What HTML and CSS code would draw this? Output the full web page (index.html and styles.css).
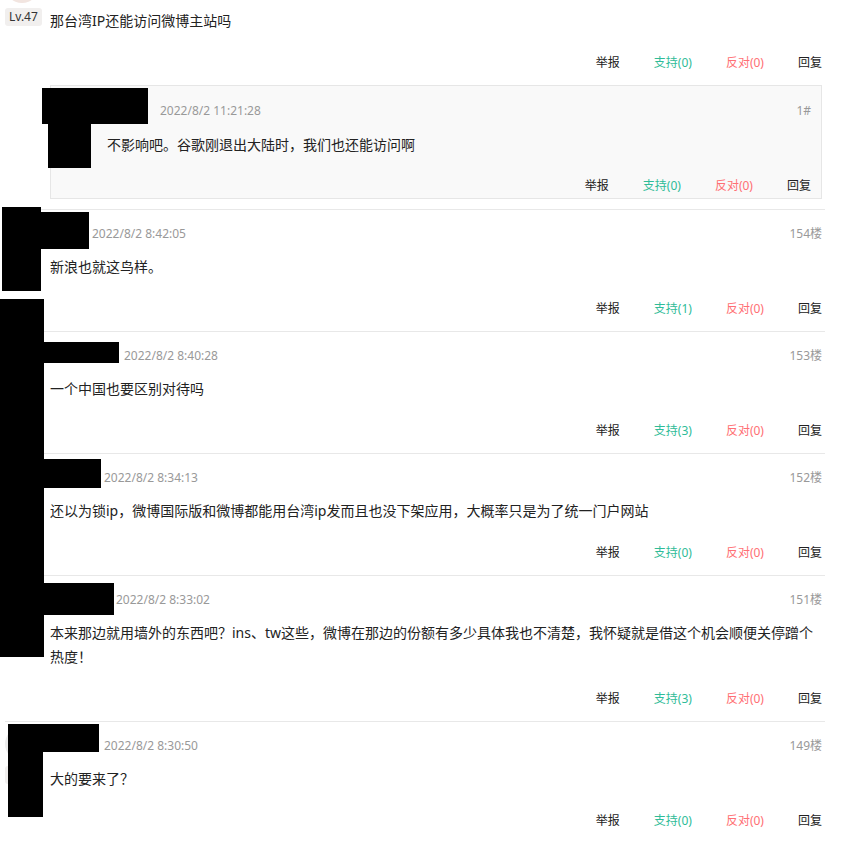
FILE: index.html
```html
<!DOCTYPE html>
<html lang="zh-CN">

<head>
    <meta charset="UTF-8">
    <meta name="viewport" content="width=device-width, initial-scale=1.0">
    <title>评论</title>
    <link rel="stylesheet" href="styles.css">
</head>

<body>
    <!-- 评论列表 -->
    <div class="comments">
        <div class="comment has-replies">
            <div class="avatar-col">
                <div class="avatar avatar-pink"></div>
                <span class="level">Lv.47</span>
            </div>
            <div class="comment-body">
                <div class="comment-head">
                    <span class="name" style="width:60px">网友</span>
                    <span class="time">2022/8/2 8:50:11</span>
                    <span class="floor">155楼</span>
                </div>
                <div class="comment-text">那台湾IP还能访问微博主站吗</div>
                <div class="actions">
                    <a href="#">举报</a>
                    <a href="#" class="up">支持(0)</a>
                    <a href="#" class="down">反对(0)</a>
                    <a href="#">回复</a>
                </div>

                <!-- 楼中楼 -->
                <div class="reply">
                    <div class="avatar-col">
                        <div class="avatar"></div>
                        <span class="level">Lv.3</span>
                    </div>
                    <div class="comment-body">
                        <div class="comment-head">
                            <span class="name" style="width:49px">昆仑</span>
                            <span class="time">2022/8/2 11:21:28</span>
                            <span class="floor">1#</span>
                        </div>
                        <div class="comment-text">不影响吧。谷歌刚退出大陆时，我们也还能访问啊</div>
                        <div class="actions">
                            <a href="#">举报</a>
                            <a href="#" class="up">支持(0)</a>
                            <a href="#" class="down">反对(0)</a>
                            <a href="#">回复</a>
                        </div>
                    </div>
                </div>
            </div>
        </div>

        <div class="comment">
            <div class="avatar-col">
                <div class="avatar"></div>
                <span class="level">Lv.8</span>
            </div>
            <div class="comment-body">
                <div class="comment-head">
                    <span class="name" style="width:38px">网友</span>
                    <span class="time">2022/8/2 8:42:05</span>
                    <span class="floor">154楼</span>
                </div>
                <div class="comment-text">新浪也就这鸟样。</div>
                <div class="actions">
                    <a href="#">举报</a>
                    <a href="#" class="up">支持(1)</a>
                    <a href="#" class="down">反对(0)</a>
                    <a href="#">回复</a>
                </div>
            </div>
        </div>

        <div class="comment">
            <div class="avatar-col">
                <div class="avatar"></div>
                <span class="level">Lv.20</span>
            </div>
            <div class="comment-body">
                <div class="comment-head">
                    <span class="name" style="width:70px">网友</span>
                    <span class="time">2022/8/2 8:40:28</span>
                    <span class="floor">153楼</span>
                </div>
                <div class="comment-text">一个中国也要区别对待吗</div>
                <div class="actions">
                    <a href="#">举报</a>
                    <a href="#" class="up">支持(3)</a>
                    <a href="#" class="down">反对(0)</a>
                    <a href="#">回复</a>
                </div>
            </div>
        </div>

        <div class="comment">
            <div class="avatar-col">
                <div class="avatar"></div>
                <span class="level">Lv.15</span>
            </div>
            <div class="comment-body">
                <div class="comment-head">
                    <span class="name" style="width:50px">网友</span>
                    <span class="time">2022/8/2 8:34:13</span>
                    <span class="floor">152楼</span>
                </div>
                <div class="comment-text">还以为锁ip，微博国际版和微博都能用台湾ip发而且也没下架应用，大概率只是为了统一门户网站</div>
                <div class="actions">
                    <a href="#">举报</a>
                    <a href="#" class="up">支持(0)</a>
                    <a href="#" class="down">反对(0)</a>
                    <a href="#">回复</a>
                </div>
            </div>
        </div>

        <div class="comment">
            <div class="avatar-col">
                <div class="avatar"></div>
                <span class="level">Lv.31</span>
            </div>
            <div class="comment-body">
                <div class="comment-head">
                    <span class="name" style="width:62px">网友</span>
                    <span class="time">2022/8/2 8:33:02</span>
                    <span class="floor">151楼</span>
                </div>
                <div class="comment-text">本来那边就用墙外的东西吧？ins、tw这些，微博在那边的份额有多少具体我也不清楚，我怀疑就是借这个机会顺便关停蹭个热度！</div>
                <div class="actions">
                    <a href="#">举报</a>
                    <a href="#" class="up">支持(3)</a>
                    <a href="#" class="down">反对(0)</a>
                    <a href="#">回复</a>
                </div>
            </div>
        </div>

        <div class="comment">
            <div class="avatar-col">
                <div class="avatar"></div>
                <span class="level">Lv.9</span>
            </div>
            <div class="comment-body">
                <div class="comment-head">
                    <span class="name" style="width:50px">网友</span>
                    <span class="time">2022/8/2 8:30:50</span>
                    <span class="floor">149楼</span>
                </div>
                <div class="comment-text">大的要来了？</div>
                <div class="actions">
                    <a href="#">举报</a>
                    <a href="#" class="up">支持(0)</a>
                    <a href="#" class="down">反对(0)</a>
                    <a href="#">回复</a>
                </div>
            </div>
        </div>
    </div>

    <!-- 打码块，盖在头像和昵称上 -->
    <div class="redactions">
        <div class="redact" style="left:42px;top:88px;width:106px;height:36px"></div>
        <div class="redact" style="left:48px;top:124px;width:43px;height:44px"></div>
        <div class="redact" style="left:2px;top:207px;width:39px;height:84px"></div>
        <div class="redact" style="left:41px;top:212px;width:48px;height:37px"></div>
        <div class="redact" style="left:0;top:299px;width:44px;height:358px"></div>
        <div class="redact" style="left:44px;top:342px;width:75px;height:21px"></div>
        <div class="redact" style="left:44px;top:459px;width:57px;height:29px"></div>
        <div class="redact" style="left:44px;top:583px;width:70px;height:32px"></div>
        <div class="redact" style="left:8px;top:724px;width:35px;height:93px"></div>
        <div class="redact" style="left:43px;top:724px;width:56px;height:28px"></div>
    </div>
</body>

</html>
```

FILE: styles.css
```css
/* 基本样式 */
body {
    margin: 0;
    background-color: #fff;
    color: #222;
    font-family: "Noto Sans", "Noto Sans CJK SC", sans-serif;
    font-size: 12px;
    overflow: hidden;
}

a {
    color: #222;
    text-decoration: none;
}

/* 列表（页面已向下滚动一段） */
.comments {
    width: 820px;
    margin: -37px 0 0 5px;
}

.comment {
    display: flex;
    border-top: 1px solid #e8e8e8;
    padding: 14px 3px 12px 0;
}

.comment.has-replies {
    padding-bottom: 10px;
}

.avatar-col {
    width: 45px;
    flex-shrink: 0;
}

.avatar {
    width: 34px;
    height: 34px;
    margin-top: -9px;
    border-radius: 50%;
    background-color: #ececec;
}

.avatar-pink {
    background-color: #f2e5e0;
}

.level {
    display: inline-block;
    margin-top: 5px;
    padding: 0 4px;
    height: 18px;
    line-height: 18px;
    border-radius: 3px;
    background-color: #f1efee;
    color: #333;
}

.comment-body {
    flex: 1;
    min-width: 0;
}

.comment-head {
    display: flex;
    align-items: center;
    height: 20px;
    line-height: 20px;
}

.name {
    display: inline-block;
    margin-right: 4px;
    color: #333;
    overflow: hidden;
    white-space: nowrap;
}

.time {
    color: #999;
}

.floor {
    margin-left: auto;
    color: #999;
}

.comment-text {
    margin-top: 11px;
    font-size: 14px;
    line-height: 24px;
    color: #222;
}

.actions {
    display: flex;
    justify-content: flex-end;
    gap: 34px;
    margin-top: 20px;
    line-height: 20px;
}

.actions .up {
    color: #2fbc98;
}

.actions .down {
    color: #ff6f74;
}

/* 楼中楼 */
.reply {
    display: flex;
    margin-top: 12px;
    padding: 15px 10px 2px 10px;
    border: 1px solid #e6e6e6;
    background-color: #f9f9f9;
}

.reply .comment-text {
    margin-top: 12px;
}

.reply .actions {
    margin-top: 19px;
}

.reply .avatar-col {
    width: 46px;
}

.reply .avatar {
    width: 28px;
    height: 28px;
    margin-top: 0;
}

/* 打码 */
.redactions {
    position: absolute;
    top: 0;
    left: 0;
}

.redact {
    position: absolute;
    background-color: #000;
}
```
